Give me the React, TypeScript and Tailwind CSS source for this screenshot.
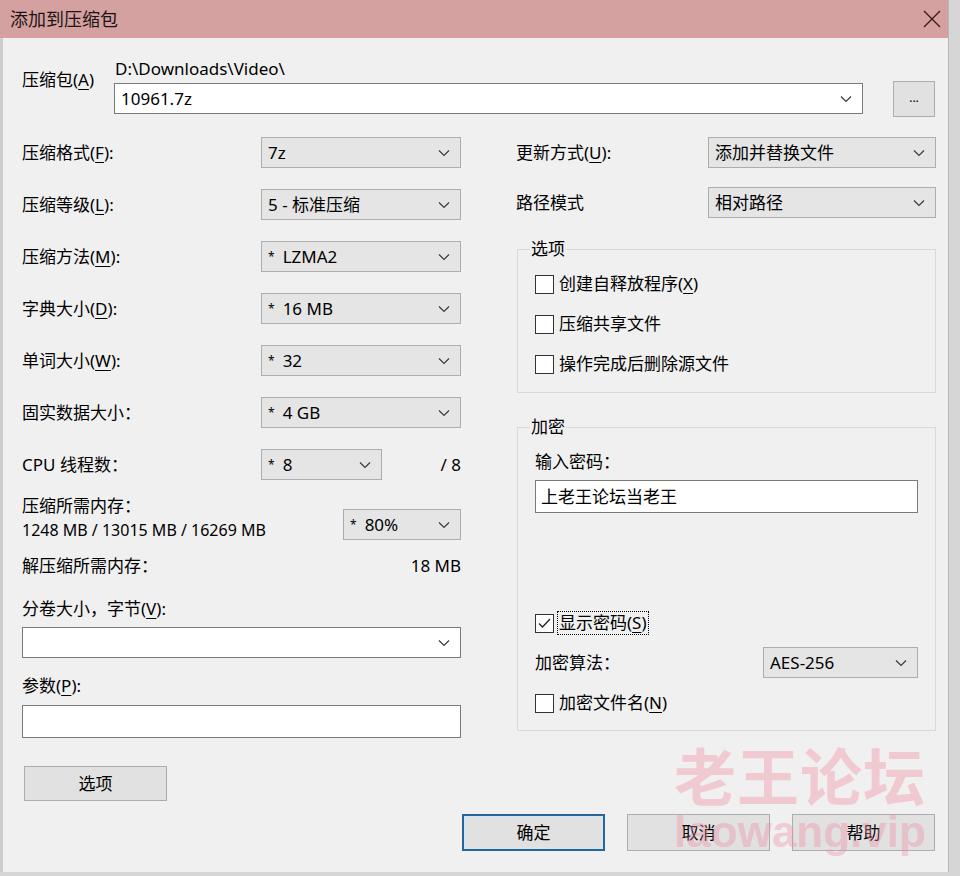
import React from 'react';

// 7-Zip "添加到压缩包" dialog
const Acc: React.FC<{ c: string }> = ({ c }) => <span className="underline underline-offset-[3px] decoration-1">{c}</span>;

const Chevron = () => (
  <svg width="12" height="8" viewBox="0 0 12 8" className="shrink-0">
    <path d="M1 1.5l5 5 5-5" fill="none" stroke="#3a3a3a" strokeWidth="1.2" />
  </svg>
);

const Combo: React.FC<{ value?: React.ReactNode; className?: string; white?: boolean }> = ({ value, className = '', white }) => (
  <div
    className={`flex items-center justify-between h-[31px] pl-[6px] pr-[10px] border ${
      white ? 'bg-white border-[#7a7a7a]' : 'bg-[#e5e5e5] border-[#adadad]'
    } ${className}`}
  >
    <span className="whitespace-nowrap leading-[22px]">{value}</span>
    <Chevron />
  </div>
);

const Star: React.FC<{ v: string }> = ({ v }) => (
  <>
    <span className="text-[12px] align-top">*</span>
    <span className="ml-[8px]">{v}</span>
  </>
);

const Check: React.FC<{ checked?: boolean; children: React.ReactNode; focus?: boolean }> = ({ checked, children, focus }) => (
  <div className="flex items-center h-[24px]">
    <div className="w-[19px] h-[19px] border border-[#333] bg-white flex items-center justify-center">
      {checked && (
        <svg width="15" height="15" viewBox="0 0 15 15">
          <path d="M2 7.5l3.5 3.5L13 3" fill="none" stroke="#222" strokeWidth="1.3" />
        </svg>
      )}
    </div>
    <span className={`ml-[4px] leading-[22px] px-[1px] whitespace-nowrap ${focus ? 'outline outline-1 outline-dotted outline-black' : ''}`}>{children}</span>
  </div>
);

const Btn: React.FC<{ children: React.ReactNode; className?: string; primary?: boolean }> = ({ children, className = '', primary }) => (
  <div
    className={`flex items-center justify-center bg-[#e1e1e1] ${
      primary ? 'border-2 border-[#2a6599] shadow-[inset_0_0_0_1px_#cde8f7]' : 'border border-[#adadad]'
    } ${className}`}
  >
    {children}
  </div>
);

const Row: React.FC<{ label: React.ReactNode; children: React.ReactNode }> = ({ label, children }) => (
  <div className="flex items-center justify-between h-[31px] mb-[21px]">
    <span className="leading-[22px] whitespace-nowrap">{label}</span>
    {children}
  </div>
);

export default function App() {
  const leftRows: [string, string, React.ReactNode][] = [
    ['压缩格式', 'F', '7z'],
    ['压缩等级', 'L', '5 - 标准压缩'],
    ['压缩方法', 'M', <Star v="LZMA2" />],
    ['字典大小', 'D', <Star v="16 MB" />],
    ['单词大小', 'W', <Star v="32" />],
  ];

  return (
    <div className="relative w-[960px] h-[876px] overflow-hidden bg-[#d6d6d6] text-[17px] text-black font-['Noto_Sans','Noto_Sans_CJK_SC',sans-serif]">
      <div className="w-[949px] h-[872px] flex flex-col bg-[#f0f0f0] border-r border-[#b8b8b8]">
        {/* title bar */}
        <div className="h-[38px] bg-[#d4a0a0] flex items-center justify-between pl-[10px] pr-[7px] shrink-0">
          <span className="text-[18px] text-[#1c1414] leading-[24px]">添加到压缩包</span>
          <svg width="18" height="18" viewBox="0 0 18 18">
            <path d="M1 1l16 16M17 1L1 17" stroke="#3b1a1a" strokeWidth="1.3" />
          </svg>
        </div>

        <div className="flex-1 border-l-[3px] border-[#cdcdcd] pl-[19px] pr-[12px] pt-[20px]">
          {/* archive path */}
          <div className="flex items-start">
            <div className="w-[92px] mt-[11px] leading-[22px] whitespace-nowrap">
              压缩包(<Acc c="A" />)
            </div>
            <div className="w-[749px]">
              <div className="h-[22px] leading-[22px] pl-[1px]">D:\Downloads\Video\</div>
              <Combo white value="10961.7z" className="mt-[3px]" />
            </div>
            <Btn className="ml-[30px] mt-[23px] w-[42px] h-[36px]">
              <span className="text-[12px] leading-none -mt-[2px]">...</span>
            </Btn>
          </div>

          <div className="flex mt-[20px]">
            {/* left column */}
            <div className="w-[439px]">
              {leftRows.map(([l, a, v]) => (
                <Row
                  key={l}
                  label={
                    <>
                      {l}(<Acc c={a} />):
                    </>
                  }
                >
                  <Combo value={v} className="w-[200px]" />
                </Row>
              ))}
              <Row label="固实数据大小：">
                <Combo value={<Star v="4 GB" />} className="w-[200px]" />
              </Row>
              <div className="flex items-center h-[31px]">
                <span className="w-[239px] leading-[22px]">CPU 线程数：</span>
                <Combo value={<Star v="8" />} className="w-[121px]" />
                <span className="ml-auto leading-[22px]">/ 8</span>
              </div>

              <div className="flex items-end justify-between mt-[15px]">
                <div>
                  <div className="leading-[22px]">压缩所需内存：</div>
                  <div className="leading-[22px] mt-[2px] text-[16px] whitespace-nowrap">1248 MB / 13015 MB / 16269 MB</div>
                </div>
                <Combo value={<Star v="80%" />} className="w-[118px] mb-[1px]" />
              </div>
              <div className="flex justify-between mt-[14px] leading-[22px]">
                <span>解压缩所需内存：</span>
                <span>18 MB</span>
              </div>

              <div className="mt-[21px] leading-[22px]">
                分卷大小，字节(<Acc c="V" />):
              </div>
              <Combo white className="mt-[7px] w-full" />
              <div className="mt-[17px] leading-[22px]">
                参数(<Acc c="P" />):
              </div>
              <div className="mt-[8px] h-[33px] bg-white border border-[#7a7a7a]" />
              <Btn className="mt-[28px] ml-[2px] w-[143px] h-[35px]">选项</Btn>
            </div>

            {/* right column */}
            <div className="w-[420px] ml-[55px]">
              <div className="flex items-center justify-between h-[31px]">
                <span className="leading-[22px]">
                  更新方式(<Acc c="U" />):
                </span>
                <Combo value="添加并替换文件" className="w-[228px]" />
              </div>
              <div className="flex items-center justify-between h-[31px] mt-[19px]">
                <span className="leading-[22px]">路径模式</span>
                <Combo value="相对路径" className="w-[228px]" />
              </div>

              <fieldset className="mt-[21px] ml-[1px] border border-[#d9d9d9]">
                <legend className="ml-[12px] px-[1px] leading-[20px]">选项</legend>
                <div className="px-[17px] pt-[13px] pb-[16px] flex flex-col gap-[16px]">
                  <Check>
                    创建自释放程序(<Acc c="X" />)
                  </Check>
                  <Check>压缩共享文件</Check>
                  <Check>操作完成后删除源文件</Check>
                </div>
              </fieldset>

              <fieldset className="mt-[24px] ml-[1px] border border-[#d9d9d9]">
                <legend className="ml-[12px] px-[1px] leading-[20px]">加密</legend>
                <div className="px-[17px] pt-[14px] pb-[15px]">
                  <div className="leading-[22px]">输入密码：</div>
                  <div className="mt-[7px] h-[33px] bg-white border border-[#7a7a7a] flex items-center pl-[5px] leading-[22px]">
                    上老王论坛当老王
                  </div>
                  <div className="mt-[98px]">
                    <Check checked focus>
                      显示密码(<Acc c="S" />)
                    </Check>
                  </div>
                  <div className="flex items-center justify-between h-[31px] mt-[12px]">
                    <span className="leading-[22px]">加密算法：</span>
                    <Combo value="AES-256" className="w-[155px]" />
                  </div>
                  <div className="mt-[13px]">
                    <Check>
                      加密文件名(<Acc c="N" />)
                    </Check>
                  </div>
                </div>
              </fieldset>
            </div>
          </div>

          {/* bottom buttons */}
          <div className="flex justify-end gap-[22px] mt-[13px] pr-[1px]">
            <Btn primary className="w-[143px] h-[37px]">确定</Btn>
            <Btn className="w-[143px] h-[37px]">取消</Btn>
            <Btn className="w-[143px] h-[37px]">帮助</Btn>
          </div>
        </div>
      </div>

      {/* watermark */}
      <div className="absolute left-[674px] top-[738px] pointer-events-none flex flex-col items-center font-bold text-[#ef8ea3]/40 font-['Noto_Sans_CJK_SC','Noto_Sans',sans-serif]">
        <span className="text-[62px] leading-[72px] tracking-[1px]">老王论坛</span>
        <span className="text-[44px] leading-[48px] font-['Liberation_Sans',sans-serif] -mt-[2px]">laowang.vip</span>
      </div>
    </div>
  );
}
